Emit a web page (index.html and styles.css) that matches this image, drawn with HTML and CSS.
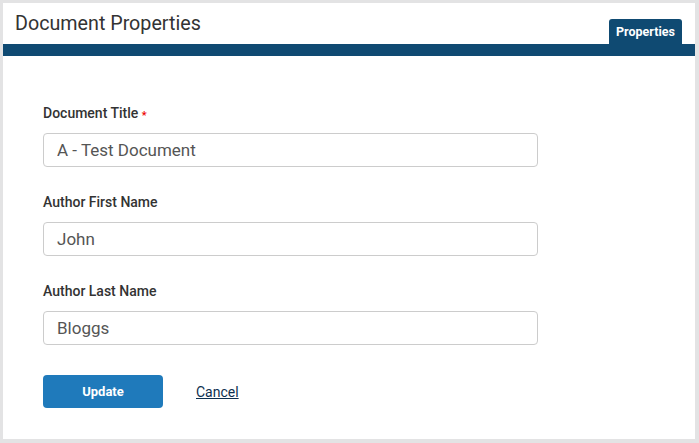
FILE: index.html
```html
<!DOCTYPE html>
<html>
<head>
<meta charset="utf-8">
<link rel="stylesheet" href="styles.css">
</head>
<body>
<div class="panel">
  <div class="header">
    <h1 class="title">Document Properties</h1>
    <div class="tab">Properties</div>
  </div>
  <div class="bar"></div>
  <form class="form">
    <div class="field">
      <label class="label">Document Title <span class="req">*</span></label>
      <input class="input" type="text" value="A - Test Document">
    </div>
    <div class="field">
      <label class="label">Author First Name</label>
      <input class="input" type="text" value="John">
    </div>
    <div class="field">
      <label class="label">Author Last Name</label>
      <input class="input" type="text" value="Bloggs">
    </div>
    <div class="actions">
      <button class="btn" type="button">Update</button>
      <a class="cancel" href="#">Cancel</a>
    </div>
  </form>
</div>
</body>
</html>
```
FILE: styles.css
```css
html, body {
  margin: 0;
  padding: 0;
}
body {
  background: #e3e3e4;
  font-family: Roboto, "Liberation Sans", Arial, sans-serif;
  width: 699px;
  height: 443px;
  overflow: hidden;
}
.panel {
  margin: 3px 0 0 3px;
  width: 692px;
  height: 436px;
  background: #fff;
}
.header {
  height: 41px;
  display: flex;
  justify-content: space-between;
  align-items: flex-end;
}
.title {
  align-self: flex-start;
  margin: 0;
  padding: 9px 0 0 12px;
  font-size: 19.7px;
  line-height: 24px;
  font-weight: 400;
  color: #333;
}
.tab {
  margin-right: 13px;
  height: 25px;
  width: 73px;
  box-sizing: border-box;
  background: #0f4a72;
  color: #fff;
  font-size: 12.5px;
  font-weight: 700;
  line-height: 25px;
  text-align: center;
  border-radius: 3px 3px 0 0;
}
.bar {
  height: 12px;
  background: #0f4a72;
}
.form {
  padding: 49px 0 0 40px;
  margin: 0;
}
.field {
  display: flex;
  flex-direction: column;
  margin-bottom: 27px;
}
.label {
  display: block;
  height: 16px;
  overflow: visible;
  font-size: 14px;
  line-height: 16px;
  font-weight: 500;
  color: #333;
  margin-bottom: 12px;
}
.req {
  color: #e00;
  font-size: 11px;
  line-height: 10px;
  vertical-align: -1px;
}
.input {
  box-sizing: border-box;
  width: 495px;
  height: 34px;
  margin: 0;
  border: 1px solid #cccccc;
  border-radius: 4px;
  padding: 0 13px;
  font-family: Roboto, "Liberation Sans", Arial, sans-serif;
  font-size: 17px;
  color: #555;
  outline: none;
}
.actions {
  display: flex;
  align-items: center;
  margin-top: 30px;
}
.btn {
  width: 120px;
  height: 33px;
  border: 0;
  border-radius: 4px;
  background: #1f7abb;
  color: #fff;
  font-family: Roboto, "Liberation Sans", Arial, sans-serif;
  font-size: 13px;
  font-weight: 700;
  padding: 0;
}
.cancel {
  margin-left: 33px;
  font-size: 14px;
  color: #0d2f4f;
  text-decoration: underline;
}
```
